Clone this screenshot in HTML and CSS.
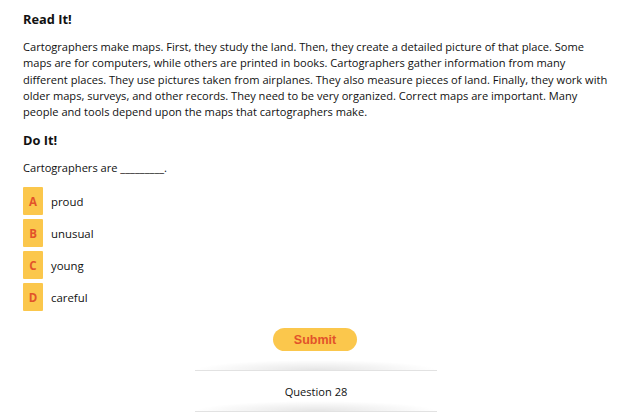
FILE: index.html
```html
<!DOCTYPE html>
<html>
<head>
<meta charset="utf-8">
<link rel="stylesheet" href="styles.css">
</head>
<body>
<main class="page">
  <section class="read">
    <h2 class="heading">Read It!</h2>
    <p class="passage">Cartographers make maps. First, they study the land. Then, they create a detailed picture of that place. Some maps are for computers, while others are printed in books. Cartographers gather information from many different places. They use pictures taken from airplanes. They also measure pieces of land. Finally, they work with older maps, surveys, and other records. They need to be very organized. Correct maps are important. Many people and tools depend upon the maps that cartographers make.</p>
  </section>
  <section class="do">
    <h2 class="heading">Do It!</h2>
    <p class="prompt">Cartographers are _________.</p>
    <ul class="options">
      <li class="option"><span class="letter">A</span><span class="label">proud</span></li>
      <li class="option"><span class="letter">B</span><span class="label">unusual</span></li>
      <li class="option"><span class="letter">C</span><span class="label">young</span></li>
      <li class="option"><span class="letter">D</span><span class="label">careful</span></li>
    </ul>
  </section>
  <div class="actions">
    <button class="submit">Submit</button>
  </div>
  <footer class="counter">
    <div class="rule rule-top"></div>
    <div class="counter-text">Question 28</div>
    <div class="rule rule-bottom"></div>
  </footer>
</main>
</body>
</html>
```

FILE: styles.css
```css
html, body {
  margin: 0;
  padding: 0;
  background: #fff;
}
body {
  font-family: "Open Sans", "Liberation Sans", sans-serif;
  color: #111;
  font-size: 11.1px;
}
.page {
  width: 640px;
  height: 417px;
  overflow: hidden;
  padding: 11px 29px 0 23px;
  box-sizing: border-box;
}
.heading {
  margin: 0;
  font-size: 12.8px;
  font-weight: 700;
  line-height: 16px;
  color: #111;
}
.passage {
  margin: 12px 0 0 0;
  line-height: 16.3px;
}
.do {
  margin-top: 12px;
}
.prompt {
  margin: 12px 0 0 0;
  line-height: 16px;
}
.options {
  list-style: none;
  margin: 11px 0 0 0;
  padding: 0;
  display: flex;
  flex-direction: column;
  gap: 4px;
}
.option {
  display: flex;
  align-items: center;
  height: 28px;
}
.letter {
  width: 20px;
  height: 28px;
  background: #fbc74c;
  color: #e2532a;
  font-weight: 700;
  font-size: 11.5px;
  display: flex;
  align-items: center;
  justify-content: center;
  border-radius: 1px;
}
.label {
  margin-left: 8px;
  font-size: 11.4px;
}
.actions {
  display: flex;
  justify-content: center;
  margin-top: 17px;
}
.submit {
  width: 84px;
  height: 23px;
  border: none;
  border-radius: 12px;
  background: #fbc74c;
  color: #e2532a;
  font-family: "Liberation Sans", Arial, sans-serif;
  font-weight: 700;
  font-size: 12.5px;
  padding: 0;
  margin-right: 4px;
}
.counter {
  width: 242px;
  margin: 19px 0 0 172px;
}
.rule {
  height: 1px;
  background: #e2e2e2;
  position: relative;
}
.rule::before {
  content: "";
  position: absolute;
  left: 0;
  right: 0;
  bottom: 1px;
  height: 10px;
  background: radial-gradient(ellipse 50% 100% at 50% 100%, rgba(0,0,0,0.10), rgba(0,0,0,0) 100%);
}
.counter-text {
  height: 40px;
  display: flex;
  align-items: center;
  justify-content: center;
}
```
